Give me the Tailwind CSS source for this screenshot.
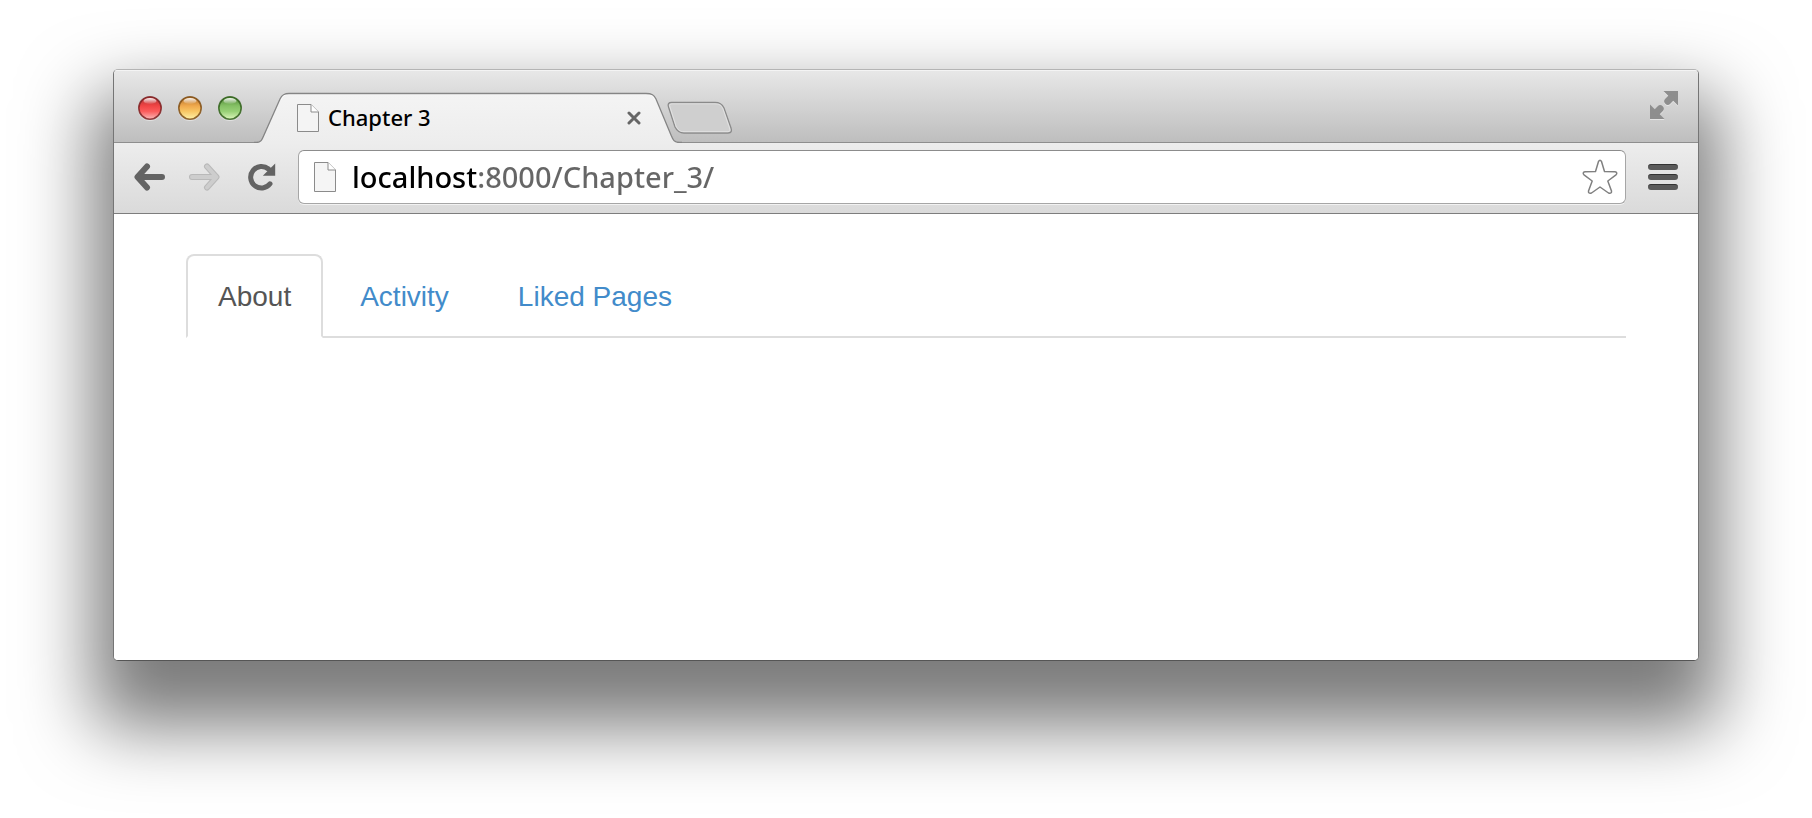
<!DOCTYPE html>
<html lang="en">
<head>
<meta charset="utf-8">
<title>Chapter 3</title>
<script src="https://cdn.jsdelivr.net/npm/@tailwindcss/browser@4"></script>
</head>
<body class="flex min-h-screen flex-col bg-white px-[113px] pt-[69px] pb-[157px]">
<div class="flex flex-1 flex-col overflow-hidden rounded-[5px] border border-t-[#b4b4b4] border-x-[#757575] border-b-[#555] bg-white shadow-[0_46px_72px_20px_rgba(0,0,0,0.52)]">

  <!-- Tab strip -->
  <header class="relative flex h-[73px] items-end border-b border-[#8e8e8e] bg-linear-to-b from-[#e8e8e8] to-[#bebebe] pr-5 pl-6 shadow-[inset_0_1px_0_#f4f4f4] font-['Noto_Sans',sans-serif]">
    <div class="flex gap-4 self-start pt-[26px]">
      <button aria-label="Close window" class="size-6"><svg viewBox="0 0 24 24" class="size-6 overflow-visible"><defs>
        <linearGradient id="r" x2="0" y2="1"><stop stop-color="#a93434"/><stop offset=".4" stop-color="#f04444"/><stop offset=".65" stop-color="#fb5c5c"/><stop offset="1" stop-color="#fbb8b8"/></linearGradient>
        <linearGradient id="y" x2="0" y2="1"><stop stop-color="#b0702a"/><stop offset=".4" stop-color="#efa84c"/><stop offset=".65" stop-color="#f8c664"/><stop offset="1" stop-color="#fdf2a8"/></linearGradient>
        <linearGradient id="g" x2="0" y2="1"><stop stop-color="#4d8433"/><stop offset=".4" stop-color="#84c064"/><stop offset=".65" stop-color="#97d076"/><stop offset="1" stop-color="#dcf6bc"/></linearGradient>
        <linearGradient id="hl" x2="0" y2="1"><stop stop-color="#fff" stop-opacity=".95"/><stop offset="1" stop-color="#fff" stop-opacity=".05"/></linearGradient></defs>
        <circle cx="12" cy="13" r="12" fill="#fff" opacity=".45"/><circle cx="12" cy="12" r="11.2" fill="url(#r)" stroke="#7c2223" stroke-opacity=".85" stroke-width="1.6"/><ellipse cx="12" cy="5" rx="6.500" ry="3" fill="url(#hl)"/></svg></button>
      <button aria-label="Minimize window" class="size-6"><svg viewBox="0 0 24 24" class="size-6 overflow-visible"><circle cx="12" cy="13" r="12" fill="#fff" opacity=".45"/><circle cx="12" cy="12" r="11.2" fill="url(#y)" stroke="#7f4f16" stroke-opacity=".85" stroke-width="1.6"/><ellipse cx="12" cy="5" rx="6.500" ry="3" fill="url(#hl)"/></svg></button>
      <button aria-label="Zoom window" class="size-6"><svg viewBox="0 0 24 24" class="size-6 overflow-visible"><circle cx="12" cy="13" r="12" fill="#fff" opacity=".45"/><circle cx="12" cy="12" r="11.2" fill="url(#g)" stroke="#31601c" stroke-opacity=".85" stroke-width="1.6"/><ellipse cx="12" cy="5" rx="6.500" ry="3" fill="url(#hl)"/></svg></button>
    </div>

    <div class="relative -mb-px ml-3 flex h-[51px] w-[428px] items-center pr-[41px] pl-[43px]">
      <svg viewBox="0 0 428 51" class="absolute inset-0 h-[51px] w-[428px]" fill="none"><defs><linearGradient id="tab" x2="0" y2="1"><stop stop-color="#f4f4f4"/><stop offset="1" stop-color="#ededed"/></linearGradient></defs>
        <path d="M2 51V50.500C7 50.500 8 48 10 43L26 7C28 3 30 1.500 35 1.500H392C398 1.500 400 3 402 7L417 43C419 48 420 50.500 426 50.500V51Z" fill="url(#tab)"/>
        <path d="M27 8C29 4 31 2.500 35 2.500H392C397 2.500 399 4 401 8" stroke="#fff" stroke-opacity=".7"/>
        <path d="M0 50.500H2C7 50.500 8 48 10 43L26 7C28 3 30 1.500 35 1.500H392C398 1.500 400 3 402 7L417 43C419 48 420 50.500 426 50.500H428" stroke="#858585" stroke-width="1.300"/></svg>
      <svg viewBox="0 0 22 28" class="relative h-7 w-[22px]" fill="#f4f4f4" stroke="#8b8b8b"><path d="M.5.500H14L21.500 8V27.500H.5Z"/><path d="M14 .5V8H21.500" fill="#fff"/></svg>
      <span class="relative ml-[9px] flex-1 pb-0.5 text-[22px] leading-7 font-medium text-black">Chapter 3</span>
      <button aria-label="Close tab" class="relative"><svg viewBox="0 0 14 14" class="size-3.5" stroke="#666" stroke-width="3" stroke-linecap="round"><path d="M2 2l10 10M12 2L2 12"/></svg></button>
    </div>
    <button aria-label="New tab" class="relative -ml-[15px] mb-[7px]"><svg viewBox="0 0 66 34" class="h-[34px] w-[66px]"><path d="M4.500 1.500H48C53 1.500 55 3 57 7L64 27C65 30 64.500 32 61 32H17C12 32 10 30 8 26L1.500 6C.5 3 1.500 1.500 4.500 1.500Z" fill="#cfcfcf" stroke="#8a8a8a" stroke-width="1.300"/><path d="M5 2.800H48C52 2.800 54 4 56 8L62.500 27C63 29 63 30.700 61 30.700H17C13 30.700 11 29 9 25L3 6C2 4 3 2.800 5 2.800Z" fill="none" stroke="#e6e6e6" stroke-opacity=".8"/></svg></button>

    <button aria-label="Enter full screen" class="mt-[21px] ml-auto self-start"><svg viewBox="0 0 28 28" class="size-7 overflow-visible" stroke-width="7" stroke-linecap="round"><g fill="#e6e6e6" stroke="#e6e6e6" transform="translate(0 1)"><path d="M13.500 0H28V14.500Z" stroke="none"/><path d="M21 7L17.800 10.200"/><path d="M0 13.500V28H14.500Z" stroke="none"/><path d="M7 21L10.200 17.800"/></g><g fill="#8e8e8e" stroke="#8e8e8e"><path d="M13.500 0H28V14.500Z" stroke="none"/><path d="M21 7L17.800 10.200"/><path d="M0 13.500V28H14.500Z" stroke="none"/><path d="M7 21L10.200 17.800"/></g></svg></button>
  </header>

  <!-- Toolbar -->
  <nav class="flex h-[71px] items-center border-b border-[#7d7d7d] bg-linear-to-b from-[#ededed] to-[#dadada] px-5 pb-0.5">
    <button aria-label="Back"><svg viewBox="0 0 32 28" class="h-7 w-8" fill="none" stroke="#636363" stroke-width="6" stroke-linecap="round" stroke-linejoin="round"><path d="M13 3.500L3.500 14 13 24.500M5 14H28"/></svg></button>
    <button aria-label="Forward" disabled class="ml-[22px]"><svg viewBox="0 0 32 28" class="h-7 w-8" fill="none" stroke-linecap="round" stroke-linejoin="round"><path d="M19 3.500L28.500 14 19 24.500M27 14H4" stroke="#b9b9b9" stroke-width="6"/><path d="M19 3.500L28.500 14 19 24.500M27 14H4" stroke="#cdcdcd" stroke-width="4"/></svg></button>
    <button aria-label="Reload" class="ml-7"><svg viewBox="0 0 28 28" class="size-7"><path d="M22 20.800A10.800 10.800 0 1 1 20.500 6" fill="none" stroke="#636363" stroke-width="5" stroke-linecap="round"/><path d="M27.200.500V12.800H14.800Z" fill="#636363"/></svg></button>
    <form class="ml-[22px] flex h-[54px] flex-1 items-center rounded-md border border-[#a6a6a6] border-t-[#8c8c8c] bg-white pr-[7px] pl-[15px] shadow-[0_1px_0_#f2f2f2]">
      <svg viewBox="0 0 22 30" class="h-[30px] w-[22px]" fill="#f5f5f5" stroke="#8b8b8b"><path d="M.5.500H14L21.500 8V29.500H.5Z"/><path d="M14 .5V8H21.500" fill="#fff"/></svg>
      <input type="text" aria-label="Address" value="localhost:8000/Chapter_3/" class="ml-4 h-12 min-w-0 flex-1 bg-linear-to-r from-black from-[124px] to-[#666] to-[124px] bg-clip-text pb-0.5 font-['Noto_Sans',sans-serif] text-[29px] font-medium text-transparent outline-none">
      <button type="button" aria-label="Bookmark this page"><svg viewBox="0 0 36 36" class="size-9" fill="#fff" stroke="#808080" stroke-width="1.500" stroke-linejoin="round"><path d="M16.500 2.500Q18 0 19.500 2.500L22.500 12.500 33 12.800Q36 13.500 34 15.800L25.800 22 29.500 32Q29.800 35 26.500 34L18 28 9.500 34Q6.200 35 6.500 32L10.200 22 2 15.800Q0 13.500 3 12.800L13.500 12.500Z"/></svg></button>
    </form>
    <button aria-label="Menu" class="ml-[22px] flex flex-col gap-1">
      <span class="h-1.5 w-[30px] rounded-full border-t border-[#333] bg-[#5a5a5a]"></span>
      <span class="h-1.5 w-[30px] rounded-full border-t border-[#333] bg-[#5a5a5a]"></span>
      <span class="h-1.5 w-[30px] rounded-full border-t border-[#333] bg-[#5a5a5a]"></span>
    </button>
  </nav>

  <!-- Page -->
  <main class="flex-1 bg-white px-[72px] pt-10 font-['Liberation_Sans',Arial,sans-serif] text-[28px] leading-10">
    <ul class="flex gap-[5px] border-b-2 border-[#ddd]">
      <li class="-mb-0.5"><a href="#about" aria-current="page" class="block rounded-t-lg border-2 border-[#ddd] border-b-white bg-white px-[30px] pt-[21px] pb-[19px] text-[#555]">About</a></li>
      <li class="-mb-0.5"><a href="#activity" class="block rounded-t-lg border-2 border-transparent px-[30px] pt-[21px] pb-[19px] text-[#428bca]">Activity</a></li>
      <li class="-mb-0.5"><a href="#liked" class="block rounded-t-lg border-2 border-transparent px-[30px] pt-[21px] pb-[19px] text-[#428bca]">Liked Pages</a></li>
    </ul>
  </main>
</div>
</body>
</html>
